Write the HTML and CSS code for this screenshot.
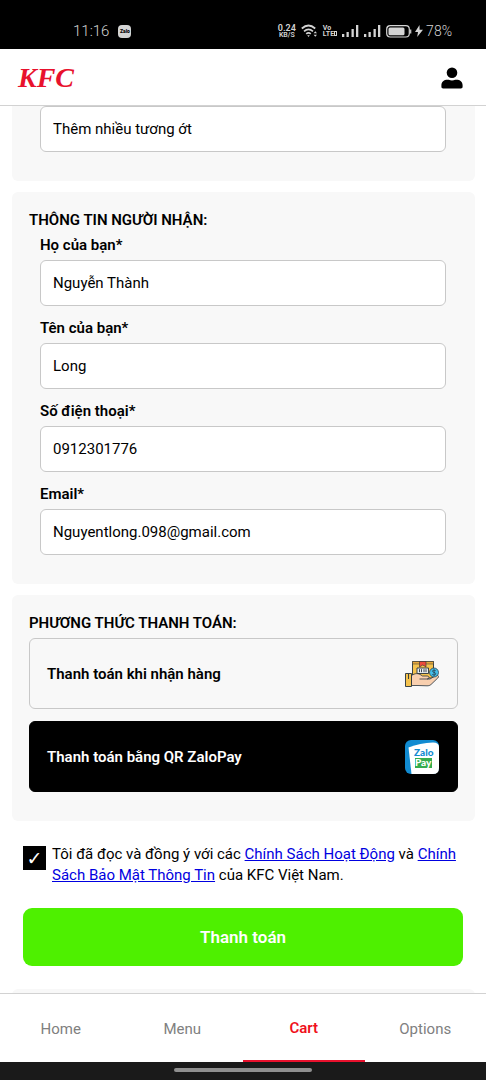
FILE: index.html
```html
<!DOCTYPE html>
<html lang="vi">
<head>
<meta charset="utf-8">
<meta name="viewport" content="width=device-width, initial-scale=1">
<title>KFC - Thanh toán</title>
<link rel="stylesheet" href="styles.css">
</head>
<body>
<div class="app">
  <div class="status">
    <div class="status-left">
      <span class="clock">11:16</span>
      <span class="zalo-chip">Zalo</span>
    </div>
    <div class="status-right">
      <span class="speed"><b>0.24</b><span>KB/S</span></span>
      <svg class="wifi" width="17" height="14" viewBox="0 0 17 14" fill="none" stroke="#d4d4d4" stroke-width="1.7">
        <path d="M.8 4.500Q7.500-1.500 14.200 4.500M3 7.300Q7.500 3.500 12 7.300M5.200 9.800Q7.500 8 9.800 9.800"/>
        <path d="M6.200 11.300h2.600l-1.300 1.700zM12.600 9.200l1.700-2 1.700 2zM12.600 10.700l1.700 2 1.700-2z" fill="#d4d4d4" stroke="none"/>
      </svg>
      <span class="volte"><span>Vo</span><span>LTE<i></i></span></span>
      <svg width="17" height="12" viewBox="0 0 17 12" fill="#d4d4d4"><path d="M0 9h2.300v3H0zM4.500 7h2.300v5H4.500zM9.500 4h2.300v8H9.500zM14 0h2.300v12H14z"/></svg>
      <svg width="17" height="12" viewBox="0 0 17 12" fill="#d4d4d4"><path d="M0 9h2.300v3H0zM4.500 7h2.300v5H4.500zM9.500 4h2.300v8H9.500zM14 0h2.300v12H14z"/></svg>
      <svg class="battery" width="26" height="13" viewBox="0 0 26 13">
        <rect x=".7" y=".7" width="22.600" height="11.300" rx="3.500" fill="none" stroke="#d4d4d4" stroke-width="1.200"/>
        <rect x="2.500" y="2.500" width="16" height="7.700" rx="1.500" fill="#d4d4d4"/>
        <path d="M24.700 4.500v4" stroke="#d4d4d4" stroke-width="1.200"/>
      </svg>
      <svg width="8" height="12" viewBox="0 0 8 12" fill="#d4d4d4"><path d="M4.500 0L0 7h3L2.200 12 8 4.700H4.600z"/></svg>
      <span class="percent">78%</span>
    </div>
  </div>

  <header class="header">
    <a class="logo" href="#home">KFC</a>
    <button class="account" type="button" aria-label="Tài khoản">
      <svg width="22" height="22" viewBox="0 0 22 22"><circle cx="11" cy="5.700" r="5.300"/><path d="M.4 18.300C.4 14.800 3 12.800 6.500 12.800h1.300c1.900.8 4.500.8 6.400 0h1.300c3.500 0 6.100 2 6.100 5.500v1.400c0 1-.7 1.700-1.700 1.700H2.100c-1 0-1.700-.7-1.700-1.700z"/></svg>
    </button>
  </header>

  <main class="content">
    <section class="card card-note">
      <div class="fields">
        <input class="input" type="text" aria-label="Ghi chú" value="Thêm nhiều tương ớt">
      </div>
    </section>

    <section class="card">
      <h2 class="title">THÔNG TIN NGƯỜI NHẬN:</h2>
      <div class="fields">
        <div class="field"><label class="label" for="ho">Họ của bạn*</label><input class="input" id="ho" type="text" value="Nguyễn Thành"></div>
        <div class="field"><label class="label" for="ten">Tên của bạn*</label><input class="input" id="ten" type="text" value="Long"></div>
        <div class="field"><label class="label" for="sdt">Số điện thoại*</label><input class="input" id="sdt" type="tel" value="0912301776"></div>
        <div class="field"><label class="label" for="email">Email*</label><input class="input" id="email" type="email" value="Nguyentlong.098@gmail.com"></div>
      </div>
    </section>

    <section class="card">
      <h2 class="title">PHƯƠNG THỨC THANH TOÁN:</h2>
      <div class="options">
        <button class="option" type="button">
          <span>Thanh toán khi nhận hàng</span>
          <svg width="34" height="34" viewBox="0 0 34 34" stroke="#26323c" stroke-width=".9" stroke-linejoin="round">
            <path d="M7.500 4.500h21V21h-21z" fill="#f5c34e"/>
            <path d="M7.500 4.500h21V7h-21z" fill="#e9a93c" stroke-width=".5"/>
            <path d="M14.500 4.500h6.500V10l-3.200-2-3.300 2z" fill="#ed4b3b" stroke-width=".6"/>
            <path d="M12 11h11.500v5.500H12z" fill="#e8edf0"/>
            <path d="M14.500 12.200v3M16.500 12.200v3M19 12.200v3M21 12.200v3" fill="none"/>
            <path d="M6.500 18.500c3.500-2.300 6.500-2.500 9.500-.5l1.500 1h4.500c2.600 0 2.600 3 0 3h3l5.500-3.300c2.600-1.400 4 .8 2.300 2.300L26 27.500c-1.200 1-2.300 1.300-4 1.300l-9-.3H6.500z" fill="#f8cfaf" stroke-width=".8"/>
            <path d="M14.500 22H22" fill="none" stroke-width=".8"/>
            <path d="M.5 16.500h6v13h-6z" fill="#f5c34e"/>
            <path d="M3.500 17v5" fill="none"/>
            <circle cx="29" cy="15.500" r="4.500" fill="#43bdea" stroke-width=".7"/>
            <path d="M30.800 13.800c-1-.9-3.400-.9-3.400.4s3.400 1 3.400 2.600-2.700 1.500-3.600.5M29.100 12.400v6.400" fill="none" stroke-width=".7"/>
          </svg>
        </button>
        <button class="option option-selected" type="button">
          <span>Thanh toán bằng QR ZaloPay</span>
          <svg width="34" height="34" viewBox="0 0 34 34">
            <rect width="34" height="34" rx="6" fill="#118bd1"/>
            <path d="M3.500 7.500Q15 3 28 2.500q6 0 6 4.500v21q0 6-6 6H6.500z" fill="#fff"/>
            <rect x="10" y="18" width="17" height="10" fill="#35ac4c"/>
            <text class="zp zp-blue" x="9" y="16">Zalo</text>
            <text class="zp zp-white" x="10" y="26">Pay</text>
          </svg>
        </button>
      </div>
    </section>

    <div class="terms">
      <input class="check" id="agree" type="checkbox" checked>
      <label class="terms-text" for="agree">Tôi đã đọc và đồng ý với các <a href="#chinh-sach">Chính Sách Hoạt Động</a> và <a href="#bao-mat">Chính Sách Bảo Mật Thông Tin</a> của KFC Việt Nam.</label>
    </div>
    <button class="pay" type="submit">Thanh toán</button>
    <section class="card"></section>
  </main>

  <nav class="tabs">
    <a class="tab" href="#home">Home</a>
    <a class="tab" href="#menu">Menu</a>
    <a class="tab tab-active" href="#cart">Cart</a>
    <a class="tab" href="#options">Options</a>
  </nav>
  <div class="gesture"><span class="handle"></span></div>
</div>
</body>
</html>
```
FILE: styles.css
```css
* { box-sizing: border-box; }
body { margin: 0; background: #fff; color: #000; font: 15px/20px Roboto, "Noto Sans", sans-serif; }
button, input { font: inherit; color: inherit; }
.app { display: flex; flex-direction: column; height: 100vh; }

.status { flex: none; display: flex; justify-content: space-between; padding: 21px 34px 8px 73px; background: #000; color: #d4d4d4; }
.status-left, .status-right { display: flex; align-items: center; height: 20px; }
.status-left { gap: 9px; }
.clock { font-size: 15px; font-weight: 300; }
.zalo-chip { width: 13px; height: 13px; border-radius: 4px; background: #d4d4d4; color: #000; font-size: 5px; font-weight: 900; line-height: 13px; text-align: center; }
.status-right { gap: 5px; }
.speed { display: flex; flex-direction: column; align-items: center; font-size: 7px; font-weight: 600; line-height: 7px; }
.speed b { font-size: 9px; line-height: 8px; font-weight: 600; }
.volte { display: flex; flex-direction: column; font-size: 7px; font-weight: 700; line-height: 6px; }
.volte i { display: inline-block; width: 3px; height: 5px; border: 1px solid; }
.battery { margin-right: -2px; }
.percent { font-size: 14px; font-weight: 300; margin-left: -2px; }

.header { flex: none; display: flex; justify-content: space-between; align-items: center; padding: 14px 23px 12px 18px; border-bottom: 1px solid #d2d2d2; }
.logo { color: #e8112d; font: italic bold 28px/30px "Liberation Serif", serif; text-decoration: none; }
.account { display: flex; padding: 0; border: 0; background: none; }

.content { flex: 1; min-height: 0; overflow: hidden; display: flex; flex-direction: column; }
.card { flex: none; margin: 0 11px 11px 12px; padding: 18px 17px 29px; border-radius: 6px; background: #f8f8f8; }
.card-note { padding-top: 0; border-radius: 0 0 6px 6px; }
.title { margin: 0 0 5px; font-size: 15px; line-height: 20px; font-weight: 600; }
.fields { display: flex; flex-direction: column; gap: 12px; padding: 0 12px 0 11px; }
.field { display: flex; flex-direction: column; gap: 5px; }
.label { font-weight: 600; }
.input { width: 100%; height: 46px; padding: 0 12px; border: 1px solid #c8c8c8; border-radius: 6px; background: #fff; outline: 0; }
.options { display: flex; flex-direction: column; gap: 12px; }
.option { display: flex; align-items: center; justify-content: space-between; height: 71px; padding: 0 18px 0 17px; border: 1px solid #c8c8c8; border-radius: 6px; background: #f8f8f8; font-weight: 600; text-align: left; }
.option-selected { border-color: #000; background: #000; color: #fff; }
.zp { font: 900 10px Lato, sans-serif; }
.zp-blue { fill: #118bd1; }
.zp-white { fill: #fff; }

.terms { flex: none; display: flex; gap: 6px; margin: 12px 23px 22px; }
.check { flex: none; appearance: none; display: grid; place-items: center; width: 23px; height: 24px; margin: 2px 0 0; background: #000; color: #fff; }
.check::before { content: ""; }
.check:checked::before { content: "✓"; font: 19px/24px "DejaVu Sans", sans-serif; }
.terms-text { line-height: 21px; }
.terms a { color: #0000e0; }
.pay { flex: none; height: 58px; margin: 0 23px 23px; border: 0; border-radius: 9px; background: #4ef000; color: #fff; font-size: 17px; font-weight: 600; }

.tabs { flex: none; display: grid; grid-template-columns: repeat(4, 1fr); border-top: 1px solid #d2d2d2; background: #fff; }
.tab { display: flex; align-items: center; justify-content: center; height: 68px; padding-top: 4px; border-bottom: 2px solid transparent; color: #808080; text-decoration: none; }
.tab-active { padding-top: 2px; border-color: #e8112d; color: #f0101c; font-weight: 600; }
.gesture { flex: none; display: flex; justify-content: center; height: 18px; padding-top: 6px; background: #1a1a1a; }
.handle { width: 138px; height: 4px; border-radius: 2px; background: #8f8f8f; }
```
